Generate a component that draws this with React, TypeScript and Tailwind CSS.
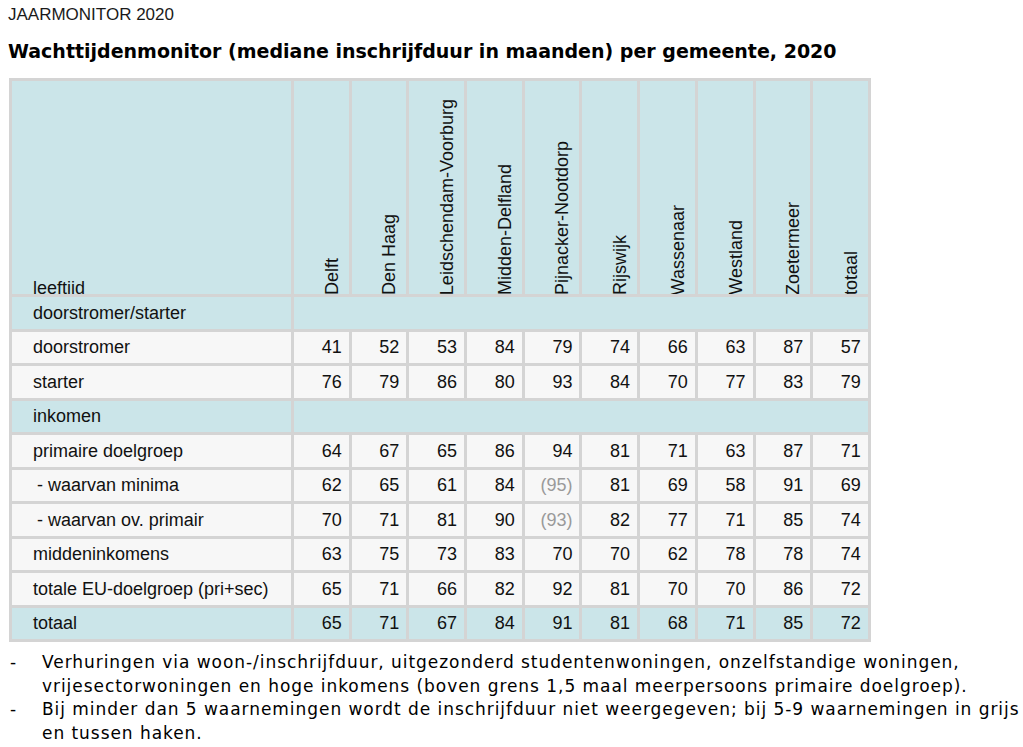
const gemeenten = [
  'Delft',
  'Den Haag',
  'Leidschendam-Voorburg',
  'Midden-Delfland',
  'Pijnacker-Nootdorp',
  'Rijswijk',
  'Wassenaar',
  'Westland',
  'Zoetermeer',
  'totaal',
]

type Row =
  | { kind: 'section'; label: string }
  | { kind: 'data' | 'total'; label: string; values: string[]; indent?: boolean }

const rows: Row[] = [
  { kind: 'section', label: 'doorstromer/starter' },
  { kind: 'data', label: 'doorstromer', values: ['41', '52', '53', '84', '79', '74', '66', '63', '87', '57'] },
  { kind: 'data', label: 'starter', values: ['76', '79', '86', '80', '93', '84', '70', '77', '83', '79'] },
  { kind: 'section', label: 'inkomen' },
  { kind: 'data', label: 'primaire doelgroep', values: ['64', '67', '65', '86', '94', '81', '71', '63', '87', '71'] },
  { kind: 'data', label: '- waarvan minima', indent: true, values: ['62', '65', '61', '84', '(95)', '81', '69', '58', '91', '69'] },
  { kind: 'data', label: '- waarvan ov. primair', indent: true, values: ['70', '71', '81', '90', '(93)', '82', '77', '71', '85', '74'] },
  { kind: 'data', label: 'middeninkomens', values: ['63', '75', '73', '83', '70', '70', '62', '78', '78', '74'] },
  { kind: 'data', label: 'totale EU-doelgroep (pri+sec)', values: ['65', '71', '66', '82', '92', '81', '70', '70', '86', '72'] },
  { kind: 'total', label: 'totaal', values: ['65', '71', '67', '84', '91', '81', '68', '71', '85', '72'] },
]

const cell = 'border-[3px] border-[#d4d4d4] h-[34.5px] p-0 pt-[1px]'

export default function App() {
  return (
    <div className="min-h-[747px] w-[1023px] bg-white text-[#111] font-['Liberation_Sans',sans-serif]">
      <div className="px-[8px] pt-[5px]">
        <p className="text-[17px] leading-[20px] text-[#1a1a1a]">JAARMONITOR 2020</p>
        <h1 className="mt-[14px] font-['DejaVu_Sans',sans-serif] text-[19px] font-bold leading-[24px] text-black">
          Wachttijdenmonitor (mediane inschrijfduur in maanden) per gemeente, 2020
        </h1>
      </div>

      {/* Table */}
      <table className="ml-[9px] mt-[15px] w-[859px] table-fixed border-collapse text-[18px]">
        <colgroup>
          <col className="w-[282px]" />
          {gemeenten.map(g => (
            <col key={g} className="w-[57.7px]" />
          ))}
        </colgroup>
        <thead>
          <tr>
            <th className="border-[3px] border-b-2 border-[#d4d4d4] border-b-white bg-[#cbe5e9] p-0 font-normal">
              <div className="flex h-[213px] items-end overflow-hidden pl-[21px] text-left">
                <span className="translate-y-[5px] leading-[22px]">leeftijd</span>
              </div>
            </th>
            {gemeenten.map(g => (
              <th key={g} className="border-[3px] border-b-2 border-[#d4d4d4] border-b-white bg-[#cbe5e9] p-0 font-normal">
                <div className="flex h-[213px] items-end justify-end overflow-hidden pr-[6px]">
                  <span className="translate-y-[1px] rotate-180 whitespace-nowrap text-[18px] leading-[22px] [writing-mode:vertical-rl]">
                    {g}
                  </span>
                </div>
              </th>
            ))}
          </tr>
        </thead>
        <tbody>
          {rows.map(row => {
            if (row.kind === 'section') {
              return (
                <tr key={row.label}>
                  <td className={`${cell} bg-[#cbe5e9] pl-[21px]`}>{row.label}</td>
                  <td colSpan={10} className={`${cell} bg-[#cbe5e9]`} />
                </tr>
              )
            }
            const bg = row.kind === 'total' ? 'bg-[#cbe5e9]' : 'bg-[#f7f7f7]'
            return (
              <tr key={row.label}>
                <td className={`${cell} ${bg} ${row.indent ? 'pl-[25px]' : 'pl-[21px]'}`}>{row.label}</td>
                {row.values.map((v, i) => (
                  <td
                    key={i}
                    className={`${cell} ${bg} pr-[7px] text-right ${v.startsWith('(') ? 'text-[#9a9a9a]' : ''}`}
                  >
                    {v}
                  </td>
                ))}
              </tr>
            )
          })}
        </tbody>
      </table>

      {/* Notes */}
      <div className="mt-[9px] whitespace-nowrap font-['DejaVu_Sans',sans-serif] text-[17px] leading-[23.5px] tracking-[0.95px] text-black">
        <div className="flex">
          <span className="w-[42px] shrink-0 pl-[10px]">-</span>
          <p>
            Verhuringen via woon-/inschrijfduur, uitgezonderd studentenwoningen, onzelfstandige woningen,
            <br />
            vrijesectorwoningen en hoge inkomens (boven grens 1,5 maal meerpersoons primaire doelgroep).
          </p>
        </div>
        <div className="flex">
          <span className="w-[42px] shrink-0 pl-[10px]">-</span>
          <p>
            Bij minder dan 5 waarnemingen wordt de inschrijfduur niet weergegeven; bij 5-9 waarnemingen in grijs
            <br />
            en tussen haken.
          </p>
        </div>
      </div>
    </div>
  )
}
